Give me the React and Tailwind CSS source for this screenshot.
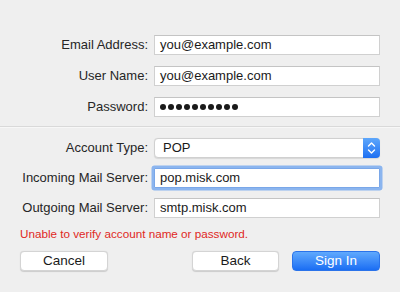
import React from "react";

const font = { fontFamily: '"Liberation Sans", Arial, sans-serif' };

function Label({ children }) {
  return (
    <div className="text-right text-[13px] text-[#262626] leading-[20px] self-center">{children}</div>
  );
}

function Field({ value, focused, className = "" }) {
  return (
    <div
      className={
        "h-[20px] bg-white text-[13px] leading-[18px] text-[#1a1a1a] pl-[5px] " +
        (focused
          ? "border border-[#7aa7e8] shadow-[0_0_0_2.5px_#8bb5ef] rounded-[1px] "
          : "border border-[#d0d0d0] border-t-[#c4c4c4] ") +
        className
      }
    >
      {value}
    </div>
  );
}

function Dots() {
  return (
    <div className="h-[20px] bg-white border border-[#d0d0d0] border-t-[#c4c4c4] pl-[5px] flex items-center gap-[2px]">
      {Array.from({ length: 10 }).map((_, i) => (
        <span key={i} className="w-[6px] h-[6px] rounded-full bg-[#1a1a1a] inline-block" />
      ))}
    </div>
  );
}

export default function App() {
  return (
    <div style={font} className="w-[400px] h-[292px] bg-[#efefef] overflow-hidden select-none">
      <div className="pt-[35px] px-[20px]">
        <div className="grid grid-cols-[128px_226px] gap-x-[6px] gap-y-[11px]">
          <Label>Email Address:</Label>
          <Field value="you@example.com" />
          <Label>User Name:</Label>
          <Field value="you@example.com" />
          <Label>Password:</Label>
          <Dots />
        </div>
      </div>
      <div className="mt-[9px] h-[1px] bg-[#d9d9d9]" />
      <div className="h-[1px] bg-[#f7f7f7]" />
      <div className="pt-[10px] px-[20px]">
        <div className="grid grid-cols-[128px_226px] gap-x-[6px] gap-y-[10px]">
          <Label>Account Type:</Label>
          <div className="h-[20px] bg-white rounded-[4px] border border-[#d0d0d0] flex items-center justify-between shadow-[0_0.5px_1px_rgba(0,0,0,0.1)]">
            <span className="pl-[8px] text-[13px] text-[#1a1a1a]">POP</span>
            <div className="w-[17px] h-[20px] -mr-[1px] rounded-r-[4px] bg-gradient-to-b from-[#5ea7fb] to-[#1d6ff2] flex items-center justify-center">
              <svg width="9" height="14" viewBox="0 0 9 14" fill="none" stroke="white" strokeWidth="1.4" strokeLinecap="round" strokeLinejoin="round">
                <path d="M1.5 5 L4.5 2 L7.5 5" />
                <path d="M1.5 9 L4.5 12 L7.5 9" />
              </svg>
            </div>
          </div>
          <Label>Incoming Mail Server:</Label>
          <Field value="pop.misk.com" focused />
          <Label>Outgoing Mail Server:</Label>
          <Field value="smtp.misk.com" />
        </div>
        <div className="mt-[10px] text-[11.7px] leading-[12px] text-[#e0281e]">
          Unable to verify account name or password.
        </div>
        <div className="mt-[11px] flex items-center">
          <button className="w-[88px] h-[20px] bg-white rounded-[4px] border border-[#d4d4d4] shadow-[0_0.5px_1px_rgba(0,0,0,0.15)] text-[13.5px] leading-[18px] text-[#1a1a1a]">
            Cancel
          </button>
          <button className="ml-[84px] w-[87px] h-[20px] bg-white rounded-[4px] border border-[#d4d4d4] shadow-[0_0.5px_1px_rgba(0,0,0,0.15)] text-[13.5px] leading-[18px] text-[#1a1a1a]">
            Back
          </button>
          <button className="ml-[13px] w-[88px] h-[20px] rounded-[4px] bg-gradient-to-b from-[#60a9fd] to-[#1a6df3] border border-[#2a73ea] text-[13.5px] leading-[18px] text-white">
            Sign In
          </button>
        </div>
      </div>
    </div>
  );
}
